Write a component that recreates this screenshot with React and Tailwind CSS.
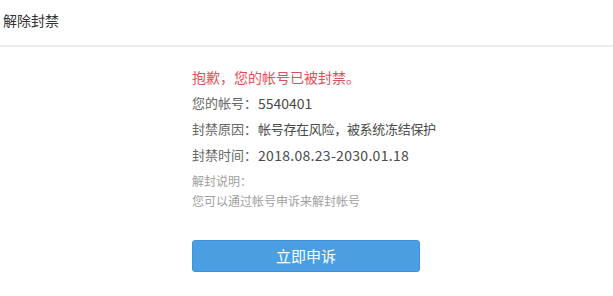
export default function App() {
  const font = { fontFamily: '"Noto Sans CJK SC", "Liberation Sans", sans-serif' };
  const rows = [
    ['您的帐号：', '5540401', 'text-[14px]'],
    ['封禁原因：', '帐号存在风险，被系统冻结保护', 'text-[13px] tracking-[-0.3px]'],
    ['封禁时间：', '2018.08.23-2030.01.18', 'text-[14px] tracking-[0.3px]'],
  ];

  return (
    <div className="h-[296px] w-[613px] overflow-hidden bg-white" style={font}>
      <div className="h-[47px] border-b-2 border-[#ececec] px-[3px] pt-[10px] text-[14px] leading-[20px] text-[#333]">
        解除封禁
      </div>

      <div className="flex flex-col pl-[192px]">
        <p className="mt-[20px] text-[14px] leading-[20px] text-[#e0505a]">抱歉，您的帐号已被封禁。</p>

        <div className="mt-[3px] flex flex-col">
          {rows.map(([label, value, size]) => (
            <div key={label} className="flex h-[26px] items-center text-[13px] leading-[26px]">
              <span className="w-[66px] text-[#666]">{label}</span>
              <span className={`${size} leading-[26px] text-[#4a4a4a]`}>{value}</span>
            </div>
          ))}
        </div>

        <p className="mt-[3px] text-[12px] leading-[20px] text-[#a0a0a0]">解封说明：</p>
        <p className="text-[12px] leading-[20px] text-[#a0a0a0]">您可以通过帐号申诉来解封帐号</p>

        <button
          type="button"
          className="mt-[29px] h-[32px] w-[228px] rounded-[3px] border border-[#3f93d9] bg-[#4a9fe3] text-[15px] text-white"
        >
          立即申诉
        </button>
      </div>
    </div>
  );
}
